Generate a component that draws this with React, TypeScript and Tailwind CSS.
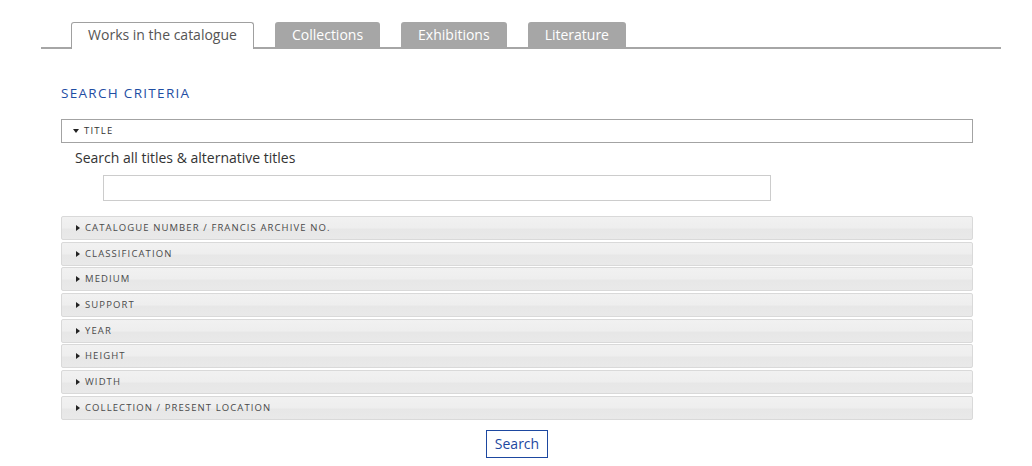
import React from "react";

const tabs = ["Collections", "Exhibitions", "Literature"];

const sections = [
  "Catalogue number / Francis archive no.",
  "Classification",
  "Medium",
  "Support",
  "Year",
  "Height",
  "Width",
  "Collection / present location",
];

function CaretRight() {
  return (
    <span className="inline-block h-0 w-0 border-y-[3.5px] border-l-[4.5px] border-y-transparent border-l-[#222]" />
  );
}

function CaretDown() {
  return (
    <span className="inline-block h-0 w-0 border-x-[3.5px] border-t-[4.5px] border-x-transparent border-t-[#222]" />
  );
}

export default function App() {
  return (
    <div
      className="min-h-[466px] w-[1032px] bg-white text-[#333]"
      style={{ fontFamily: '"Open Sans", "Liberation Sans", sans-serif' }}
    >
      {/* Tab strip */}
      <div className="ml-[41px] flex w-[960px] gap-[21px] border-b-2 border-[#a6a6a6] pl-[30px] pt-[22px]">
        <div className="-mb-[2px] flex h-[27px] w-[183px] items-start justify-center rounded-t-[3px] border border-b-0 border-[#a0a0a0] bg-white pt-[2px] text-[14px] leading-[20px] text-[#555]">
          Works in the catalogue
        </div>
        {tabs.map((t) => (
          <div
            key={t}
            className="flex h-[25px] items-center rounded-t-[3px] bg-[#a6a6a6] px-[17px] text-[14px] text-white"
          >
            {t}
          </div>
        ))}
      </div>

      <div className="ml-[61px] w-[912px]">
        <h2 className="mt-[36px] text-[13.5px] leading-[16px] tracking-[1.3px] text-[#1f4ea3]">
          SEARCH CRITERIA
        </h2>

        {/* Expanded section */}
        <div className="mt-[18px] flex h-[24px] items-center gap-[5px] border border-[#a3a3a3] pl-[11px] text-[9.5px] tracking-[1.2px] text-[#333]">
          <CaretDown />
          <span>TITLE</span>
        </div>
        <div className="pl-[14px] pt-[5px] text-[14px] leading-[19px]">
          Search all titles &amp; alternative titles
        </div>
        <div className="ml-[42px] mt-[8px] h-[26px] w-[668px] border border-[#cccccc]" />

        {/* Collapsed sections */}
        <div className="mt-[15px] flex flex-col gap-[1.7px]">
          {sections.map((s) => (
            <div
              key={s}
              className="flex h-[24px] items-center gap-[5px] rounded-[2px] border border-[#d9d9d9] bg-[linear-gradient(#f1f1f1_0%,#eeeeee_50%,#e7e7e7_55%,#e9e9e9_100%)] pl-[14px] text-[9.5px] uppercase tracking-[1.1px] text-[#4a4a4a]"
            >
              <CaretRight />
              <span>{s}</span>
            </div>
          ))}
        </div>

        <div className="mt-[10px] flex justify-center">
          <button className="h-[28px] w-[62px] border border-[#1d48a0] bg-white text-[14px] text-[#1d48a0]">
            Search
          </button>
        </div>
      </div>
    </div>
  );
}
